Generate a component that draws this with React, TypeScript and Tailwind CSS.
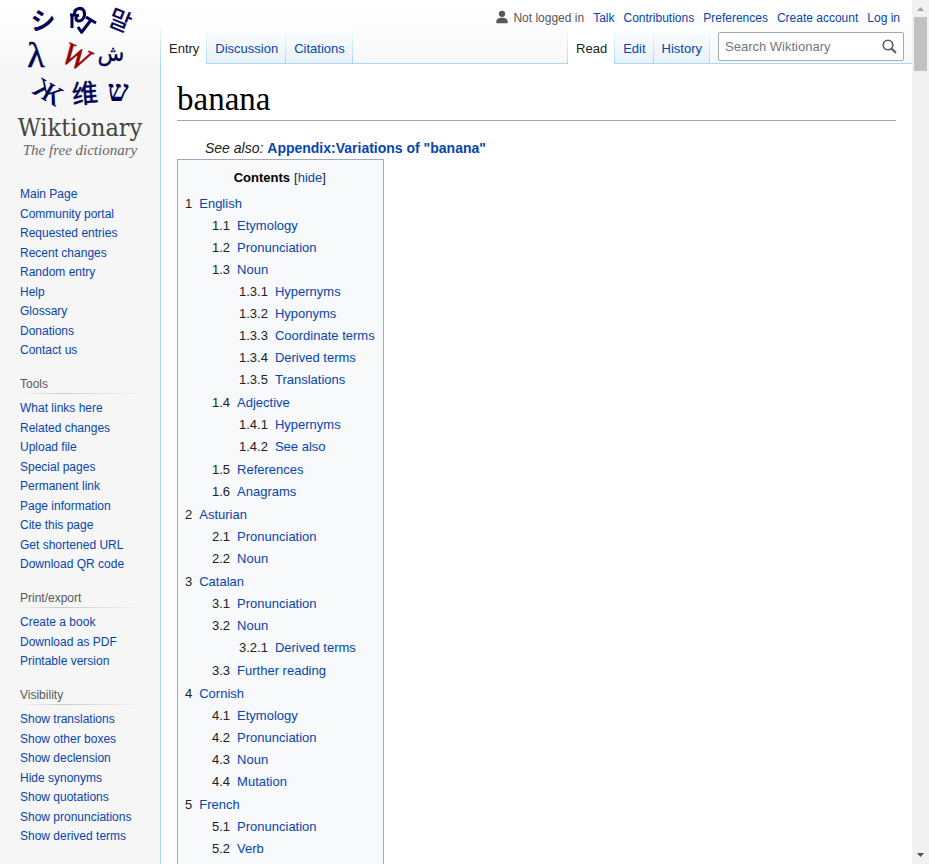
import React from "react";

type Entry = { label: string; children?: Entry[] };

const contents: Entry[] = [
  {
    label: "English",
    children: [
      { label: "Etymology" },
      { label: "Pronunciation" },
      {
        label: "Noun",
        children: [
          { label: "Hypernyms" },
          { label: "Hyponyms" },
          { label: "Coordinate terms" },
          { label: "Derived terms" },
          { label: "Translations" },
        ],
      },
      { label: "Adjective", children: [{ label: "Hypernyms" }, { label: "See also" }] },
      { label: "References" },
      { label: "Anagrams" },
    ],
  },
  { label: "Asturian", children: [{ label: "Pronunciation" }, { label: "Noun" }] },
  {
    label: "Catalan",
    children: [
      { label: "Pronunciation" },
      { label: "Noun", children: [{ label: "Derived terms" }] },
      { label: "Further reading" },
    ],
  },
  {
    label: "Cornish",
    children: [
      { label: "Etymology" },
      { label: "Pronunciation" },
      { label: "Noun" },
      { label: "Mutation" },
    ],
  },
  { label: "French", children: [{ label: "Pronunciation" }, { label: "Verb" }] },
];

const portals: { title?: string; links: string[] }[] = [
  {
    links: [
      "Main Page",
      "Community portal",
      "Requested entries",
      "Recent changes",
      "Random entry",
      "Help",
      "Glossary",
      "Donations",
      "Contact us",
    ],
  },
  {
    title: "Tools",
    links: [
      "What links here",
      "Related changes",
      "Upload file",
      "Special pages",
      "Permanent link",
      "Page information",
      "Cite this page",
      "Get shortened URL",
      "Download QR code",
    ],
  },
  { title: "Print/export", links: ["Create a book", "Download as PDF", "Printable version"] },
  {
    title: "Visibility",
    links: [
      "Show translations",
      "Show other boxes",
      "Show declension",
      "Hide synonyms",
      "Show quotations",
      "Show pronunciations",
      "Show derived terms",
    ],
  },
];

function Link({ children, className = "" }: { children: React.ReactNode; className?: string }) {
  return (
    <a href="#" className={`text-[#0645ad] hover:underline ${className}`}>
      {children}
    </a>
  );
}

function Logo() {
  return (
    <a href="#" aria-label="Wiktionary" className="flex flex-col items-center whitespace-nowrap">
      <svg width="120" height="114" viewBox="20 0 120 114" fill="#000054" textAnchor="middle" className="overflow-visible">
        <text x="43" y="30" fontSize="25" fontWeight="700" fontFamily="'Noto Sans CJK JP', sans-serif">シ</text>
        <g fill="none" stroke="#000054" strokeWidth="3">
          <path d="M72 28V15M70 15H75C73 9 81 6 84 11C86 17 82 21 79 21C75 21 75 16 79 15" />
          <path d="M86 17L96 23M91 20L81 33M78 27L82 33" />
        </g>
        <text transform="translate(120 20) rotate(22)" y="9" fontSize="24" stroke="#000054" strokeWidth="0.400" fontFamily="'Noto Sans CJK KR', sans-serif">말</text>
        <text x="36" y="67" fontSize="36" stroke="#000054" strokeWidth="0.500" fontFamily="'Liberation Serif', serif">λ</text>
        <text transform="translate(76 56) rotate(24)" y="11" fontSize="32" fill="#990000" stroke="#990000" strokeWidth="0.500" fontStyle="italic" fontFamily="'Liberation Serif', serif">W</text>
        <text x="111" y="61" fontSize="22" stroke="#000054" strokeWidth="0.300" fontFamily="'DejaVu Sans', sans-serif">ش</text>
        <text transform="translate(48 92) rotate(30)" y="9" fontSize="40" fontFamily="'Liberation Serif', serif">ж</text>
        <text transform="translate(85 94) rotate(-5)" y="9" fontSize="26" stroke="#000054" strokeWidth="0.500" fontFamily="'Noto Sans CJK SC', sans-serif">维</text>
        <text x="118" y="101" fontSize="30" fontWeight="700" fontFamily="'Liberation Serif', serif">ש</text>
      </svg>
      <span className="font-['DejaVu_Serif_Condensed','DejaVu_Serif',serif] text-[25px] leading-7 text-[#444]">
        Wiktionary
      </span>
      <span className="-mt-1 font-['Liberation_Serif',serif] text-[15px] leading-6 text-[#666] italic">
        The free dictionary
      </span>
    </a>
  );
}

function Sidebar() {
  return (
    <aside className="w-40 shrink-0 text-xs">
      <Logo />
      <nav className="mt-[22px] flex flex-col gap-[15px] pr-4 pl-5">
        {portals.map((portal, i) => (
          <section key={i}>
            {portal.title && (
              <>
                <h3 className="h-[18px] leading-[19px] text-[#54595d]">{portal.title}</h3>
                <div className="mb-1 h-px bg-linear-to-r from-transparent via-[#c8ccd1] via-33% to-transparent" />
              </>
            )}
            <ul className="leading-5">
              {portal.links.map((link) => (
                <li key={link} className="odd:h-5 even:h-[19px]">
                  <Link>{link}</Link>
                </li>
              ))}
            </ul>
          </section>
        ))}
      </nav>
    </aside>
  );
}

function Tab({ label, active = false }: { label: string; active?: boolean }) {
  return (
    <li className="flex">
      <a
        href="#"
        className={`pr-[7px] pl-2 pt-[15px] leading-[18px] ${
          active ? "-mb-px bg-white text-[#202122]" : "bg-linear-to-b from-white to-[#e8f2f8] text-[#0645ad]"
        }`}
      >
        {label}
      </a>
      <span className="w-px bg-linear-to-b from-white to-[#a7d7f9]" />
    </li>
  );
}

function Header() {
  return (
    <header className="shrink-0">
      <ul className="flex h-[25px] items-end justify-end gap-[9px] pr-3 pb-px text-xs leading-3">
        <li className="flex items-end gap-1 text-[#54595d]">
          <svg width="14" height="14" viewBox="0 0 20 20" fill="#54595d">
            <path d="M10 11c-5.900 0-8 3-8 5v3h16v-3c0-2-2.100-5-8-5z" />
            <circle cx="10" cy="5.500" r="4.500" />
          </svg>
          Not logged in
        </li>
        {["Talk", "Contributions", "Preferences", "Create account", "Log in"].map((item) => (
          <li key={item}>
            <Link>{item}</Link>
          </li>
        ))}
      </ul>
      <div className="flex h-[39px] border-b border-[#a7d7f9] text-[13px]">
        <ul className="flex">
          <Tab label="Entry" active />
          <Tab label="Discussion" />
          <Tab label="Citations" />
        </ul>
        <ul className="ml-auto flex">
          <li className="w-px bg-linear-to-b from-white to-[#a7d7f9]" />
          <Tab label="Read" active />
          <Tab label="Edit" />
          <Tab label="History" />
        </ul>
        <form
          role="search"
          className="mt-[7px] mr-2 ml-2 flex h-[29px] w-[186px] items-center rounded-[2px] border border-[#a2a9b1] bg-white"
        >
          <input
            type="search"
            aria-label="Search Wiktionary"
            placeholder="Search Wiktionary"
            className="w-full min-w-0 flex-1 pl-1.5 text-[13px] text-black outline-none placeholder:text-[#72777d]"
          />
          <button type="submit" aria-label="Search" className="flex w-7 justify-center">
            <svg width="15" height="15" viewBox="0 0 15 15" fill="none" stroke="#54595d" strokeWidth="2">
              <circle cx="6" cy="6" r="4.800" strokeWidth="1.600" />
              <path d="M9.500 9.500L14 14" />
            </svg>
          </button>
        </form>
      </div>
    </header>
  );
}

function ContentsList({ items, prefix = "" }: { items: Entry[]; prefix?: string }) {
  return (
    <ol className={prefix ? "mb-px ml-[27px]" : ""}>
      {items.map((item, i) => {
        const number = `${prefix}${i + 1}`;
        return (
          <li key={number}>
            <a href="#" className="flex h-[22px] gap-[7px] whitespace-nowrap">
              <span className="text-[#202122]">{number}</span>
              <span className="text-[#0645ad]">{item.label}</span>
            </a>
            {item.children && <ContentsList items={item.children} prefix={`${number}.`} />}
          </li>
        );
      })}
    </ol>
  );
}

function Scrollbar() {
  return (
    <div aria-hidden="true" className="flex w-[17px] shrink-0 flex-col items-center bg-[#f1f1f1]">
      <svg width="17" height="17" viewBox="0 0 17 17">
        <path d="M5 11L8.500 7L12 11Z" fill="#a3a3a3" />
      </svg>
      <div className="h-[54px] w-[13px] bg-[#c1c1c1]" />
      <svg width="17" height="17" viewBox="0 0 17 17" className="mt-auto">
        <path d="M5 6L8.500 10L12 6Z" fill="#505050" />
      </svg>
    </div>
  );
}

export default function App() {
  return (
    <div className="flex h-screen overflow-hidden bg-[#f6f6f6] font-['Liberation_Sans',Arial,sans-serif]">
      <div className="flex min-w-0 flex-1 bg-linear-to-b from-white to-[#f6f6f6] to-[80px]">
        <Sidebar />
        <div className="w-px shrink-0 bg-linear-to-b from-transparent from-[24px] to-[#a7d7f9] to-[64px]" />
        <div className="flex min-w-0 flex-1 flex-col">
          <Header />
          <main className="flex-1 bg-white px-4 pt-4 text-[#202122]">
            <h1 className="h-[41px] border-b border-[#a2a9b1] font-['Liberation_Serif',serif] text-[33px] leading-[38px] text-black">
              banana
            </h1>
            <p className="mt-[17px] ml-7 text-sm leading-[21px]">
              <i>See also:</i> <Link className="font-bold">Appendix:Variations of "banana"</Link>
            </p>
            <nav
              aria-label="Contents"
              className="w-fit border border-[#a2a9b1] bg-[#f8f9fa] pt-[7px] pr-2 pb-4 pl-[7px] text-[13px] leading-[22px]"
            >
              <div className="mb-1 flex justify-center gap-1">
                <h2 className="font-bold text-black">Contents</h2>
                <span>
                  [<button type="button" className="text-[#0645ad]">hide</button>]
                </span>
              </div>
              <ContentsList items={contents} />
            </nav>
          </main>
        </div>
      </div>
      <Scrollbar />
    </div>
  );
}
